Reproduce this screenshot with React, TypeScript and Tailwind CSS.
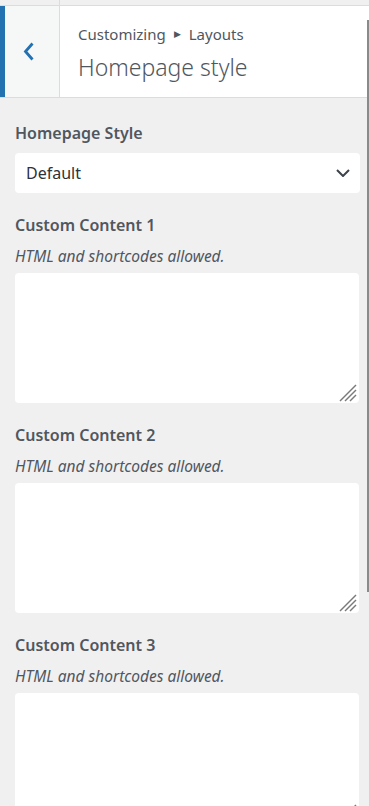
import React from 'react'

const FONT = { fontFamily: '"Noto Sans", "Open Sans", Arial, sans-serif' }

function ResizeGrip() {
  return (
    <svg
      className="absolute right-[2px] bottom-[1px] w-[18px] h-[18px] pointer-events-none"
      viewBox="0 0 18 18"
      fill="none"
      stroke="#7a7a7a"
      strokeWidth={1.4}
    >
      <path d="M1 17 L17 1" />
      <path d="M6 17 L17 6" />
      <path d="M11 17 L17 11" />
    </svg>
  )
}

function ContentField({ n }: { n: number }) {
  return (
    <div className="mt-[20px]">
      <label className="block text-[16px] leading-[24px] font-semibold text-[#50575e]">
        Custom Content {n}
      </label>
      <p className="mt-[9px] text-[15.5px] leading-[20px] italic text-[#50575e]">
        HTML and shortcodes allowed.
      </p>
      <div className="relative mt-[7px] w-[344px] h-[130px]">
        <textarea className="block w-full h-full resize-none rounded-[4px] bg-white outline-none" />
        <ResizeGrip />
      </div>
    </div>
  )
}

export default function App() {
  return (
    <div className="relative w-[369px] h-[806px] overflow-hidden bg-[#f0f0f1]" style={FONT}>
      {/* top strip */}
      <div className="flex h-[5px] border-b border-[#dcdcde] box-content">
        <div className="w-[60px] border-r border-[#dcdcde]" />
        <div className="flex-1" />
      </div>

      {/* section header */}
      <header className="flex h-[92px] bg-white border-b border-[#dcdcde]">
        <button className="w-[60px] shrink-0 flex items-center justify-center pr-[6px] bg-[#f6f7f7] border-l-[5px] border-[#2271b1] border-r border-r-[#dcdcde]">
          <svg className="w-[12px] h-[19px]" viewBox="0 0 12 19" fill="none" stroke="#2271b1" strokeWidth={2.8}>
            <path d="M9.5 1.5 L2.5 9.5 L9.5 17.5" />
          </svg>
        </button>
        <div className="pl-[18px] pt-[18px]">
          <div className="flex items-center text-[15px] leading-[20px] text-[#50575e]">
            <span>Customizing</span>
            <span className="mx-[8px] text-[9px]">▶</span>
            <span>Layouts</span>
          </div>
          <h1 className="mt-[9px] text-[23px] leading-[28px] font-light text-[#50575e]">Homepage style</h1>
        </div>
      </header>

      {/* controls */}
      <div className="pl-[15px] pt-[23px]">
        <label className="block text-[16px] leading-[24px] font-semibold text-[#50575e]">Homepage Style</label>
        <div className="mt-[8px] w-[345px] h-[40px] rounded-[4px] bg-white flex items-center justify-between pl-[11px] pr-[10px]">
          <span className="text-[16px] text-[#2c3338]">Default</span>
          <svg className="w-[14px] h-[8px]" viewBox="0 0 14 8" fill="none" stroke="#3c434a" strokeWidth={2}>
            <path d="M1 1 L7 7 L13 1" />
          </svg>
        </div>

        <ContentField n={1} />
        <ContentField n={2} />
        <ContentField n={3} />
      </div>

      {/* scrollbar thumb */}
      <div className="absolute left-[367px] top-[20px] w-[2px] h-[572px] bg-[#8a8a8a]" />
    </div>
  )
}
